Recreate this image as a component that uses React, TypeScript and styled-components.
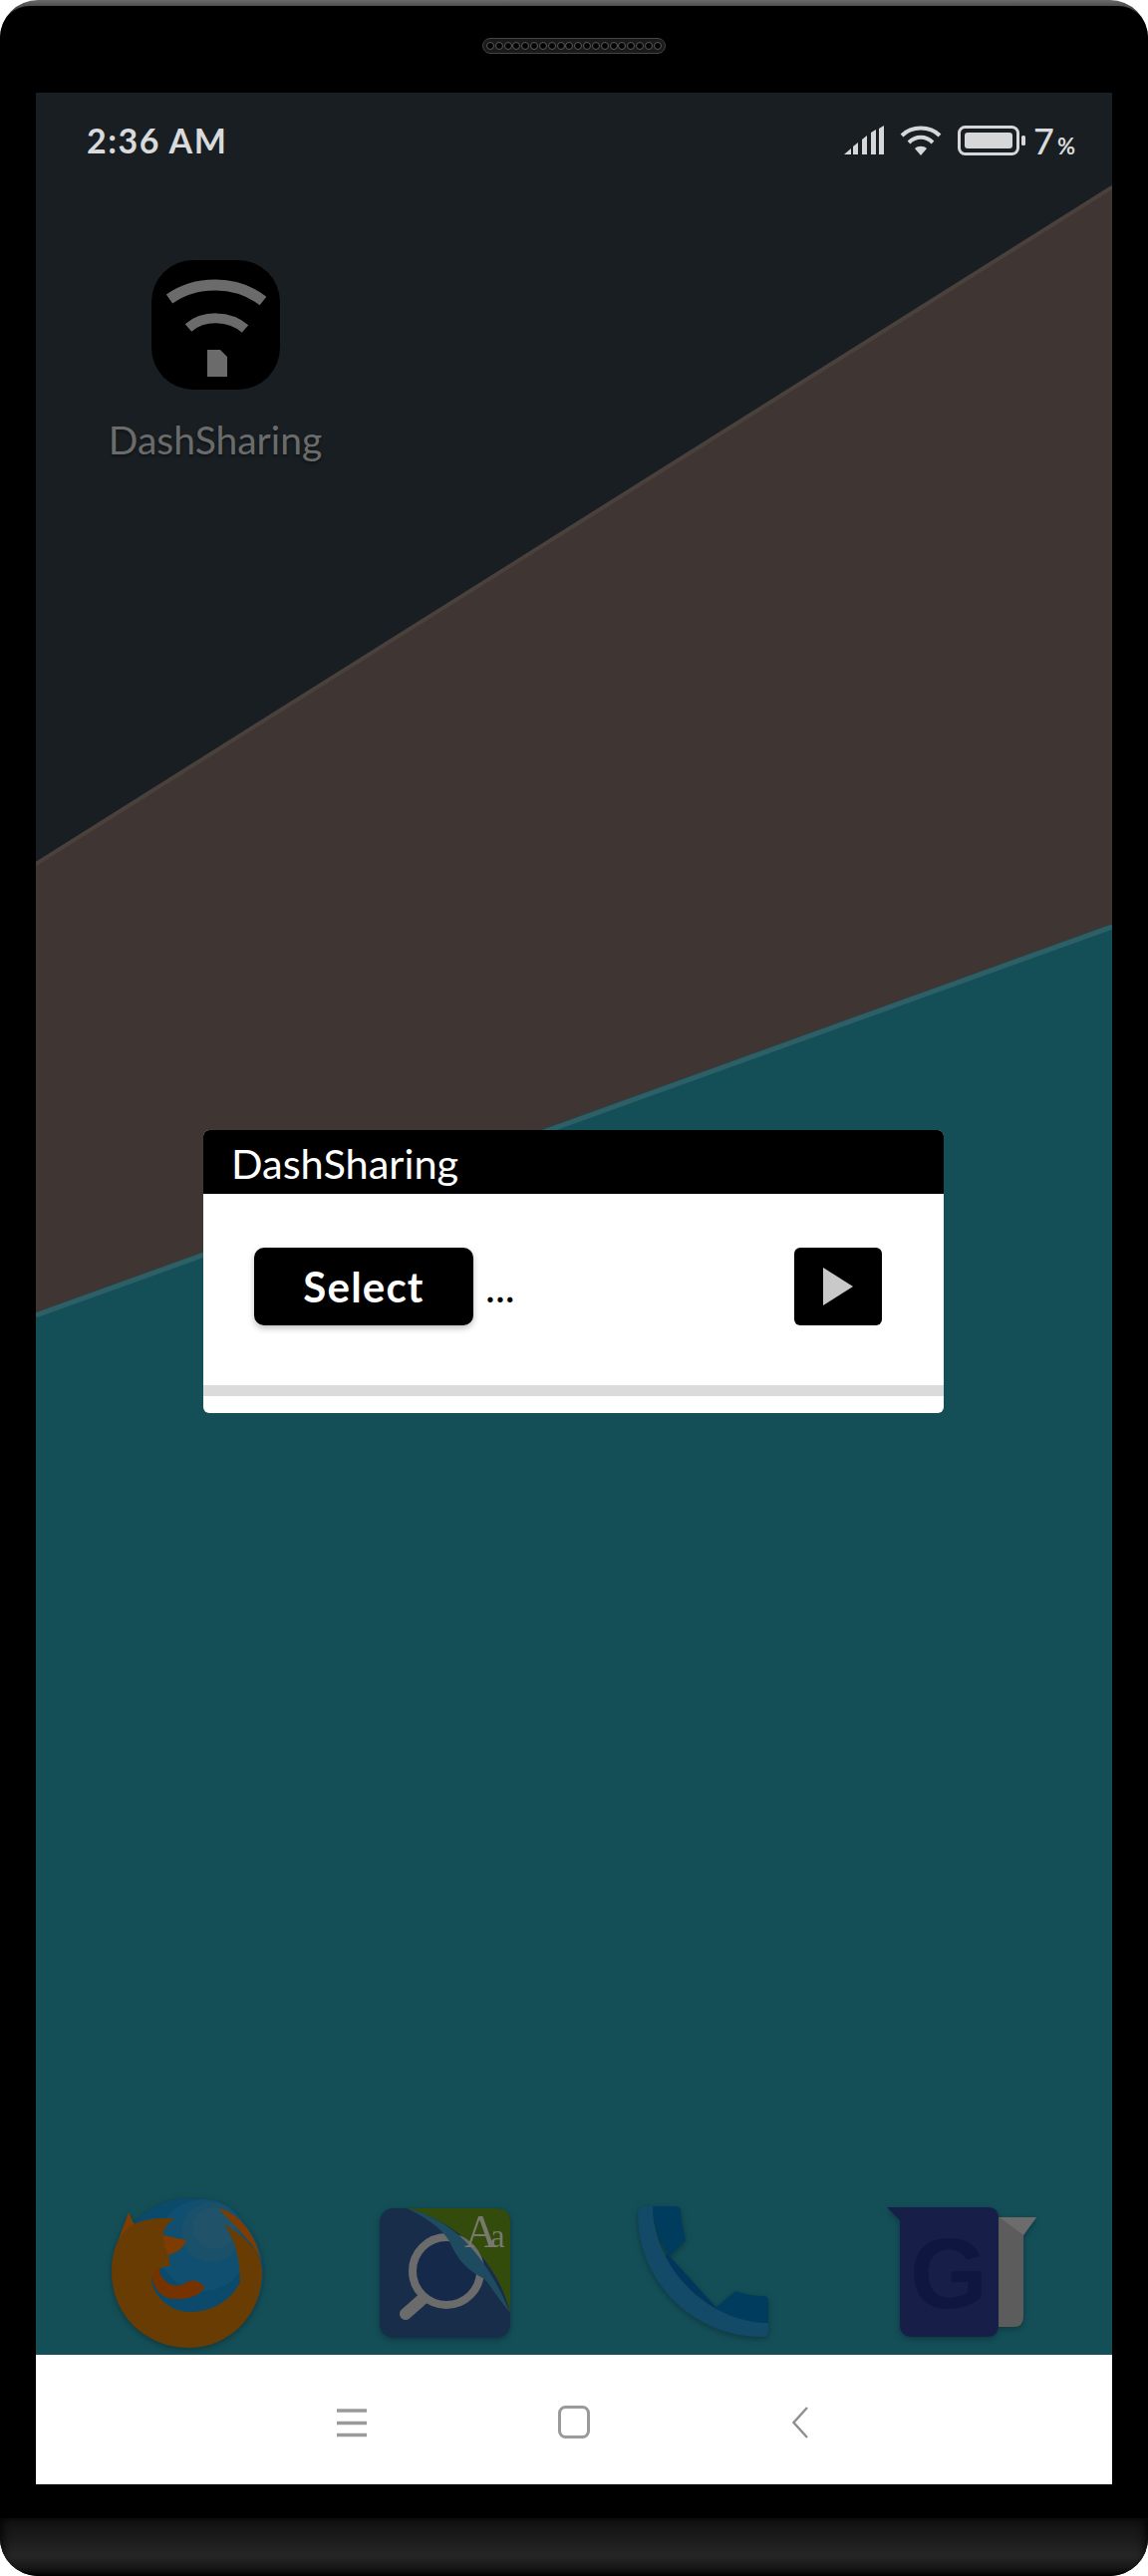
import React from "react";
import styled, { createGlobalStyle } from "styled-components";

const GlobalStyle = createGlobalStyle`
  html, body {
    margin: 0;
    padding: 0;
    background: #fff;
    font-family: "Lato", "Noto Sans", sans-serif;
  }
`;

const Phone = styled.div`
  width: 1152px;
  height: 2585px;
  border-radius: 38px;
  overflow: hidden;
  display: flex;
  flex-direction: column;
  background: linear-gradient(180deg, #6a6a6a 0, #444 8px, #222 40px, #000 70px);
`;

const TopBezel = styled.div`
  margin-top: 6px;
  height: 87px;
  box-sizing: border-box;
  padding-top: 32px;
  background: #000;
  border-radius: 30px 30px 0 0;
  display: flex;
  justify-content: center;
  align-items: flex-start;
`;

const Speaker = styled.div`
  width: 184px;
  height: 16px;
  box-sizing: border-box;
  border: 1px solid #444;
  border-radius: 8px;
  background: #1a1a1a;
  display: flex;
  align-items: center;
  justify-content: space-between;
  padding: 0 3px;
`;

const SpeakerHole = styled.span`
  width: 8px;
  height: 8px;
  box-sizing: border-box;
  border-radius: 50%;
  background: #030303;
  border: 1px solid #5a5a5a;
`;

const ScreenRow = styled.div`
  padding: 0 36px;
  background: #000;
`;

const Screen = styled.div`
  position: relative;
  height: 2400px;
  display: flex;
  flex-direction: column;
  overflow: hidden;
`;

const Wallpaper = styled.svg`
  position: absolute;
  left: 0;
  top: 0;
  width: 1080px;
  height: 2270px;
`;

const StatusBar = styled.div`
  position: relative;
  display: flex;
  justify-content: space-between;
  align-items: flex-start;
  height: 63px;
  box-sizing: border-box;
  padding: 33px 37px 0 51px;
  color: #d9dadb;
`;

const Clock = styled.span`
  font-size: 34px;
  line-height: 30px;
  font-weight: 700;
  letter-spacing: 1.5px;
`;

const StatusIcons = styled.div`
  display: flex;
  align-items: flex-start;
`;

const StatusIcon = styled.svg<{ $gap: number }>`
  display: block;
  margin-right: ${(p) => p.$gap}px;
`;

const BatteryLevel = styled.span`
  font-size: 36px;
  line-height: 30px;
  font-weight: 500;
  display: flex;
  align-items: flex-start;
`;

const Percent = styled.small`
  font-size: 22px;
  font-weight: 700;
  line-height: 20px;
  margin: 11px 0 0 3px;
`;

const Desktop = styled.div`
  position: relative;
  height: 2207px;
  display: flex;
  flex-direction: column;
`;

const Shortcut = styled.div`
  width: 208px;
  margin: 105px 0 0 76px;
  display: flex;
  flex-direction: column;
  align-items: center;
`;

const AppIcon = styled.svg`
  display: block;
`;

const ShortcutLabel = styled.span`
  margin-top: 27px;
  font-size: 39px;
  line-height: 46px;
  color: #6b6b6b;
  white-space: nowrap;
  text-shadow: 0 2px 3px rgba(0, 0, 0, 0.4);
`;

const Dialog = styled.div`
  width: 743px;
  height: 284px;
  margin: 670px 0 0 168px;
  border-radius: 6px;
  overflow: hidden;
  background: #fff;
  display: flex;
  flex-direction: column;
`;

const DialogTitle = styled.div`
  height: 64px;
  box-sizing: border-box;
  padding-left: 28px;
  background: #000;
  color: #fff;
  font-size: 41.5px;
  line-height: 66px;
  white-space: nowrap;
`;

const DialogBody = styled.div`
  height: 203px;
  box-sizing: border-box;
  padding: 54px 62px 0 51px;
  display: flex;
  align-items: flex-start;
  border-bottom: 11px solid #dbdbdb;
`;

const SelectButton = styled.button`
  width: 220px;
  height: 78px;
  border: 0;
  padding: 0;
  border-radius: 10px;
  background: #000;
  color: #fff;
  font-family: inherit;
  font-size: 42px;
  font-weight: 700;
  letter-spacing: 1.2px;
  box-shadow: 0 3px 6px rgba(0, 0, 0, 0.25);
`;

const FileName = styled.span`
  margin: 17px 0 0 12px;
  flex: 1;
  font-size: 42px;
  line-height: 44px;
  color: #000;
`;

const PlayButton = styled.button`
  width: 88px;
  height: 78px;
  border: 0;
  padding: 0;
  border-radius: 6px;
  background: #000;
  display: flex;
  align-items: center;
  justify-content: center;
`;

const Dock = styled.div`
  margin-top: auto;
  padding: 0 0 7px 22px;
  display: grid;
  grid-template-columns: repeat(4, 259px);
  align-items: end;
  justify-items: center;
`;

const DockIcon = styled.svg<{ $lift?: number }>`
  display: block;
  margin-bottom: ${(p) => p.$lift ?? 0}px;
  filter: drop-shadow(0 2px 3px rgba(0, 0, 0, 0.3));
  overflow: visible;
`;

const NavBar = styled.div`
  position: relative;
  height: 130px;
  box-sizing: border-box;
  padding-top: 5px;
  background: #fff;
  display: flex;
  justify-content: center;
  align-items: center;
`;

const NavSlot = styled.div<{ $shift?: number }>`
  width: 226px;
  box-sizing: border-box;
  padding-left: ${(p) => p.$shift ?? 0}px;
  display: flex;
  justify-content: center;
`;

const BottomBezel = styled.div`
  height: 34px;
  background: #000;
`;

const Chin = styled.div`
  height: 58px;
  background: linear-gradient(180deg, #111 0, #1b1b1b 20px, #262626 38px, #141414 52px, #000 58px);
  box-shadow: inset 6px 0 8px -2px rgba(0, 0, 0, 0.7), inset -6px 0 8px -2px rgba(0, 0, 0, 0.7);
`;

const holes = Array.from({ length: 20 }, (_, i) => i);

const FirefoxIcon = () => (
  <DockIcon width="151" height="151" viewBox="0 0 151 151">
    <circle cx="78" cy="75" r="74" fill="#0c4a6c" />
    <circle cx="92" cy="48" r="46" fill="#104f70" />
    <circle cx="100" cy="35" r="30" fill="#1a506a" />
    <circle cx="103" cy="31" r="21" fill="#20526a" />
    <path d="M107 11C125 15 143 32 150 63C143 47 130 35 107 11Z" fill="#7d3c02" />
    <path d="M7 42L17 15L24 30Z" fill="#7d3c02" />
    <path
      d="M113 27C135 40 151 55 151 75C151 118 118 151 78 151C34 151 0 118 0 75C0 60 3 50 7 42C14 32 22 26 30 24C42 20 55 21 63 21C56 26 52 32 52 38L58 42L75 43C72 51 66 55 57 58L59 69C50 69 43 74 40 82C40 95 56 115 78 115C100 115 119 105 129 85C129 70 127 48 113 27Z"
      fill="#693c03"
    />
    <path d="M52 38L75 43C72 51 66 55 57 58C53 52 52 45 52 38Z" fill="#7d3c02" />
    <path
      d="M48 70C42 74 39 80 42 86C46 97 55 103 67 102C78 102 90 98 93 90C88 84 82 82 76 85C68 90 60 90 54 84C50 80 47 76 48 70Z"
      fill="#763300"
    />
  </DockIcon>
);

const DictionaryIcon = () => (
  <DockIcon width="131" height="130" viewBox="0 0 131 130" $lift={10}>
    <rect width="131" height="130" rx="14" fill="#172d49" />
    <path d="M27 0H117Q131 0 131 14V105C120 60 85 15 27 0Z" fill="#344c0b" />
    <circle cx="67" cy="63" r="34" fill="#15294b" stroke="#6b6b6b" strokeWidth="8" />
    <path d="M43 91L26 106" stroke="#6b6b6b" strokeWidth="12" strokeLinecap="round" />
    <path
      d="M27 0C60 8 100 30 131 105C118 90 112 78 105 71C88 62 78 52 70 33C62 20 45 8 27 0Z"
      fill="#1f4b61"
    />
    <text x="85" y="39" fontFamily="Liberation Serif" fontSize="46" fill="#78796e">
      A
    </text>
    <text x="111" y="39" fontFamily="Liberation Serif" fontSize="33" fill="#78796e">
      a
    </text>
  </DockIcon>
);

const PhoneIcon = () => (
  <DockIcon width="131" height="132" viewBox="0 0 131 132" $lift={10}>
    <path d="M30 48L80 103L70 110L22 55Z" fill="#02365a" />
    <path d="M15 0H38Q43 0 43 5Q44 20 48 34L32 50C22 35 15 20 15 0Z" fill="#003c5e" />
    <path d="M77 103L98 85Q112 90 126 90Q131 90 131 95V118C110 118 92 112 77 103Z" fill="#003c5e" />
    <path
      d="M0 8Q0 0 8 0H15C15 60 70 117 131 117V125Q131 131 125 131C55 131 0 75 0 8Z"
      fill="#134a68"
    />
  </DockIcon>
);

const TranslateIcon = () => (
  <DockIcon width="150" height="131" viewBox="0 0 150 131" $lift={10}>
    <path d="M100 10H150L137 28V110Q137 120 127 120H100Z" fill="#5c5c5c" />
    <path d="M113 10H150L137 28Z" fill="#6c6c6c" />
    <path
      d="M0 0H101Q112 0 112 11V118Q112 130 100 130H26Q13 130 13 118V13Z"
      fill="#171f49"
    />
    <text
      x="62"
      y="101"
      textAnchor="middle"
      fontFamily="Liberation Sans"
      fontWeight="700"
      fontSize="100"
      fill="#0f1640"
    >
      G
    </text>
  </DockIcon>
);

export default function App() {
  return (
    <>
      <GlobalStyle />
      <Phone>
        <TopBezel>
          <Speaker>
            {holes.map((h) => (
              <SpeakerHole key={h} />
            ))}
          </Speaker>
        </TopBezel>
        <ScreenRow>
          <Screen>
            <Wallpaper viewBox="0 0 1080 2270">
              <rect width="1080" height="2270" fill="#144f58" />
              <path d="M0 0H1080V834L0 1224Z" fill="#3f3633" />
              <path d="M0 0H1080V93L0 772Z" fill="#181e22" />
              <path d="M0 774L1080 95" stroke="#4a413d" strokeWidth="4" fill="none" />
              <path d="M0 1227L1080 837" stroke="#2f5f66" strokeWidth="5" fill="none" />
            </Wallpaper>
            <StatusBar>
              <Clock>2:36 AM</Clock>
              <StatusIcons>
                <StatusIcon width="40" height="30" viewBox="0 0 40 30" $gap={16} fill="#d6d7d9">
                  <path d="M0 29L7 23V29Z" />
                  <path d="M9 21L14 17V29H9Z" />
                  <path d="M18 14L23 10V29H18Z" />
                  <path d="M27 7L32 4V29H27Z" />
                  <path d="M35 3L40 0V29H35Z" />
                </StatusIcon>
                <StatusIcon width="42" height="30" viewBox="0 0 42 30" $gap={16}>
                  <g fill="none" stroke="#d6d7d9" strokeWidth="4">
                    <path d="M2 10C12 0 30 0 40 10" />
                    <path d="M9 17C16 10 26 10 33 17" />
                  </g>
                  <path d="M15 23C18 20 24 20 27 23L21 30Z" fill="#d6d7d9" />
                </StatusIcon>
                <StatusIcon width="68" height="30" viewBox="0 0 68 30" $gap={8}>
                  <rect x="1.5" y="1.5" width="59" height="27" rx="6" fill="none" stroke="#d6d7d9" strokeWidth="3" />
                  <rect x="7" y="7" width="48" height="16" rx="3" fill="#d6d7d9" />
                  <rect x="64" y="10" width="4" height="10" rx="1.5" fill="#d6d7d9" />
                </StatusIcon>
                <BatteryLevel>
                  7<Percent>%</Percent>
                </BatteryLevel>
              </StatusIcons>
            </StatusBar>
            <Desktop>
              <Shortcut>
                <AppIcon width="129" height="130" viewBox="0 0 129 130">
                  <rect width="129" height="130" rx="42" fill="#000" />
                  <g fill="none" stroke="#6b6b6b">
                    <path d="M18 39C45 20 85 20 112 41" strokeWidth="11" />
                    <path d="M37 68C52 55 78 55 94 69" strokeWidth="10" />
                  </g>
                  <path d="M56 90H69L76 97V117H56Z" fill="#6b6b6b" />
                </AppIcon>
                <ShortcutLabel>DashSharing</ShortcutLabel>
              </Shortcut>
              <Dialog>
                <DialogTitle>DashSharing</DialogTitle>
                <DialogBody>
                  <SelectButton>Select</SelectButton>
                  <FileName>...</FileName>
                  <PlayButton>
                    <svg width="30" height="38" viewBox="0 0 30 38">
                      <path d="M0 0L30 19L0 38Z" fill="#c9c9c9" />
                    </svg>
                  </PlayButton>
                </DialogBody>
              </Dialog>
              <Dock>
                <FirefoxIcon />
                <DictionaryIcon />
                <PhoneIcon />
                <TranslateIcon />
              </Dock>
            </Desktop>
            <NavBar>
              <NavSlot $shift={6}>
                <svg width="30" height="30" viewBox="0 0 30 30">
                  <path d="M0 3H30M0 15.5H30M0 27.5H30" stroke="#9a9a9a" strokeWidth="3.4" />
                </svg>
              </NavSlot>
              <NavSlot>
                <svg width="32" height="33" viewBox="0 0 32 33">
                  <rect x="1.5" y="1.5" width="29" height="30" rx="6" fill="none" stroke="#9a9a9a" strokeWidth="3" />
                </svg>
              </NavSlot>
              <NavSlot $shift={2}>
                <svg width="16" height="32" viewBox="0 0 16 32">
                  <path d="M15 1L1.5 16L15 31" fill="none" stroke="#8f8f8f" strokeWidth="2.4" />
                </svg>
              </NavSlot>
            </NavBar>
          </Screen>
        </ScreenRow>
        <BottomBezel />
        <Chin />
      </Phone>
    </>
  );
}
